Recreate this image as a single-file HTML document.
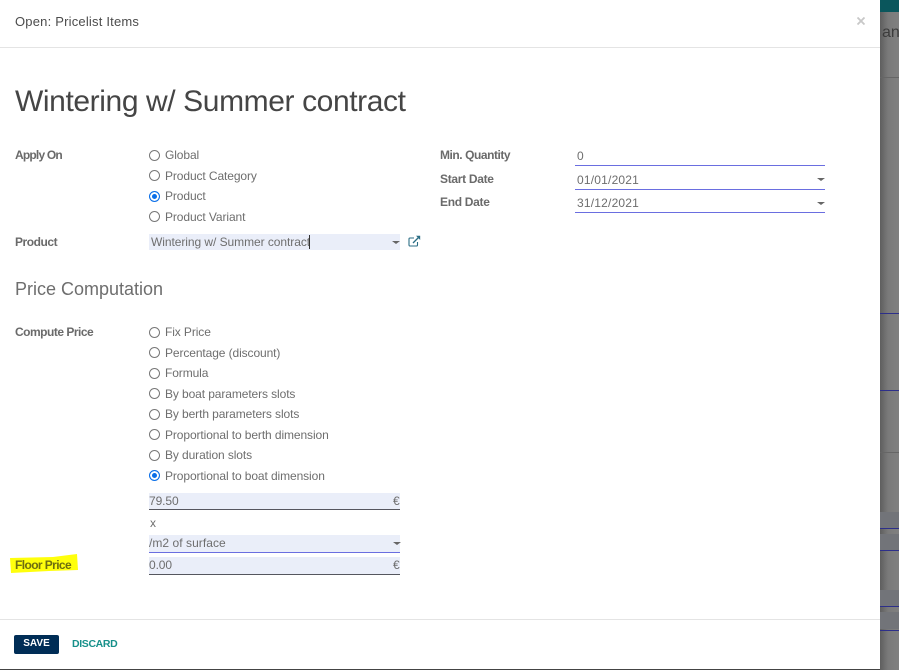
<!DOCTYPE html>
<html><head><meta charset="utf-8"><style>
html,body{margin:0;padding:0}
body{width:899px;height:670px;overflow:hidden;position:relative;background:#7c7c7c;font-family:"Liberation Sans",sans-serif;font-size:12px;color:#6e6e6e}
.t{position:absolute;white-space:nowrap;line-height:14px}
.o{letter-spacing:-.1px}
.l{font-weight:700;color:#6a6a6a;letter-spacing:-.45px}
.b{position:absolute}
.r{position:absolute;width:9px;height:9px;border:1px solid #777;border-radius:50%;background:#fff}
.r.on{border:1px solid #0a6ee8;background:#0a6ee8;box-shadow:inset 0 0 0 2px #fff}
.f{position:absolute;left:149px;width:251px;background:#eaeef9}
.c{position:absolute;width:0;height:0;border-left:4px solid transparent;border-right:4px solid transparent;border-top:3.5px solid #666}
</style></head><body>
<!-- background page -->
<div class="b" style="left:880px;top:0;width:19px;height:12px;background:#0a565c"></div>
<div class="b" style="left:880px;top:12px;width:19px;height:658px;background:linear-gradient(90deg,#5e5e5e,#7a7a7a 8px,#808080)"></div>
<div class="t" style="left:880px;top:24px;font-size:16px;line-height:18px;color:#3c3c3c;width:19px;overflow:hidden;text-indent:2px">an</div>
<div class="b" style="left:880px;top:77px;width:19px;height:1px;background:#666"></div>
<div class="b" style="left:880px;top:313px;width:19px;height:1px;background:#2d2f8a"></div>
<div class="b" style="left:880px;top:390px;width:19px;height:1px;background:#2d2f8a"></div>
<div class="b" style="left:880px;top:452px;width:19px;height:1px;background:#666"></div>
<div class="b" style="left:880px;top:512px;width:19px;height:16px;background:#727479"></div>
<div class="b" style="left:880px;top:528px;width:19px;height:1px;background:#2d2f8a"></div>
<div class="b" style="left:880px;top:534px;width:19px;height:16px;background:#727479"></div>
<div class="b" style="left:880px;top:550px;width:19px;height:1px;background:#2d2f8a"></div>
<div class="b" style="left:880px;top:590px;width:19px;height:16px;background:#727479"></div>
<div class="b" style="left:880px;top:606px;width:19px;height:1px;background:#2d2f8a"></div>
<div class="b" style="left:880px;top:612px;width:19px;height:17px;background:#727479"></div>
<div class="b" style="left:880px;top:630px;width:19px;height:1px;background:#2d2f8a"></div>

<!-- modal -->
<div class="b" style="left:0;top:0;width:880px;height:669px;background:#fff"></div>
<div class="b" style="left:0;top:669px;width:880px;height:1px;background:#444"></div>
<div class="b" style="left:0;top:47px;width:880px;height:1px;background:#e4e4e4"></div>
<div class="b" style="left:0;top:619px;width:880px;height:1px;background:#e4e4e4"></div>
<div class="t" style="left:15px;top:15px;font-size:13px;color:#4c4c4c;letter-spacing:.2px">Open: Pricelist Items</div>
<svg class="b" style="left:857px;top:17px" width="8" height="8" viewBox="0 0 8 8"><path d="M.5.5l7 7M7.5.5l-7 7" stroke="#c8c8c8" stroke-width="1.8" fill="none"/></svg>
<div class="t" style="left:15px;top:84px;font-size:30px;line-height:36px;color:#454545;letter-spacing:-.4px">Wintering w/ Summer contract</div>

<!-- Apply on -->
<div class="t l" style="left:15px;top:148px;letter-spacing:-.8px">Apply On</div>
<div class="r" style="left:149px;top:150px"></div><div class="t o" style="left:165px;top:148px">Global</div>
<div class="r" style="left:149px;top:170px"></div><div class="t o" style="left:165px;top:169px">Product Category</div>
<div class="r on" style="left:149px;top:191px"></div><div class="t o" style="left:165px;top:189px">Product</div>
<div class="r" style="left:149px;top:211px"></div><div class="t o" style="left:165px;top:210px">Product Variant</div>
<div class="t l" style="left:15px;top:235px">Product</div>
<div class="f" style="top:234px;height:16px"></div>
<div class="t" style="left:151px;top:235px;letter-spacing:-.06px">Wintering w/ Summer contract</div>
<div class="b" style="left:309px;top:235px;width:1px;height:14px;background:#333"></div>
<div class="c" style="left:392px;top:241px"></div>
<svg class="b" style="left:408px;top:235px" width="13" height="12" viewBox="0 0 13 12"><path d="M9.5 7v3a1 1 0 0 1-1 1H2a1 1 0 0 1-1-1V4a1 1 0 0 1 1-1h4" stroke="#2c6e85" stroke-width="1.1" fill="none"/><path d="M5 8l6-6" stroke="#2c6e85" stroke-width="1.3" fill="none"/><path d="M8 .8h4.2V5z" fill="#2c6e85"/></svg>

<!-- right col -->
<div class="t l" style="left:440px;top:148px">Min. Quantity</div>
<div class="t l" style="left:440px;top:172px;letter-spacing:-.3px">Start Date</div>
<div class="t l" style="left:440px;top:195px;letter-spacing:-.3px">End Date</div>
<div class="t" style="left:577px;top:149px">0</div>
<div class="b" style="left:575px;top:165px;width:250px;height:1px;background:#6a6ee0"></div>
<div class="t" style="left:577px;top:173px;letter-spacing:.2px">01/01/2021</div>
<div class="b" style="left:575px;top:189px;width:250px;height:1px;background:#6a6ee0"></div>
<div class="c" style="left:817px;top:178px"></div>
<div class="t" style="left:577px;top:196px;letter-spacing:.2px">31/12/2021</div>
<div class="b" style="left:575px;top:212px;width:250px;height:1px;background:#6a6ee0"></div>
<div class="c" style="left:817px;top:202px"></div>

<div class="t" style="left:15px;top:278px;font-size:18px;line-height:22px;color:#6e6e6e">Price Computation</div>

<!-- Compute -->
<div class="t l" style="left:15px;top:325px;letter-spacing:-.5px">Compute Price</div>
<div class="r" style="left:149px;top:327px"></div><div class="t o" style="left:165px;top:325px">Fix Price</div>
<div class="r" style="left:149px;top:347px"></div><div class="t o" style="left:165px;top:346px">Percentage (discount)</div>
<div class="r" style="left:149px;top:368px"></div><div class="t o" style="left:165px;top:366px">Formula</div>
<div class="r" style="left:149px;top:388px"></div><div class="t o" style="left:165px;top:387px">By boat parameters slots</div>
<div class="r" style="left:149px;top:409px"></div><div class="t o" style="left:165px;top:407px">By berth parameters slots</div>
<div class="r" style="left:149px;top:429px"></div><div class="t o" style="left:165px;top:428px">Proportional to berth dimension</div>
<div class="r" style="left:149px;top:450px"></div><div class="t o" style="left:165px;top:448px">By duration slots</div>
<div class="r on" style="left:149px;top:470px"></div><div class="t o" style="left:165px;top:469px">Proportional to boat dimension</div>

<div class="f" style="top:493px;height:16px;border-bottom:1px solid #55565e"></div>
<div class="t" style="left:149px;top:494px;letter-spacing:-.1px">79.50</div>
<div class="t" style="left:393px;top:494px">€</div>
<div class="t" style="left:150px;top:516px">x</div>
<div class="f" style="top:535px;height:17px;border-bottom:1px solid #6a6ee0"></div>
<div class="t" style="left:149px;top:536px;letter-spacing:.05px">/m2 of surface</div>
<div class="c" style="left:393px;top:542px"></div>
<div class="f" style="top:557px;height:17px;border-bottom:1px solid #55565e"></div>
<div class="t" style="left:149px;top:558px;letter-spacing:-.1px">0.00</div>
<div class="t" style="left:393px;top:558px">€</div>

<svg class="b" style="left:9px;top:553px" width="70" height="24" viewBox="0 0 70 24"><path d="M1 5L44 4 68 1 69 17 40 18 2 20z" fill="#ffff0c"/></svg>
<div class="t l" style="left:15px;top:558px;color:#6e6e10;letter-spacing:-.6px">Floor Price</div>

<div class="b" style="left:14px;top:635px;width:45px;height:19px;background:#002d56;border-radius:2px"></div>
<div class="t" style="left:14px;top:637px;width:45px;text-align:center;font-size:10px;font-weight:700;color:#fff">SAVE</div>
<div class="t" style="left:72px;top:637px;font-size:10.5px;font-weight:700;color:#17908a;letter-spacing:-.35px">DISCARD</div>
</body></html>
